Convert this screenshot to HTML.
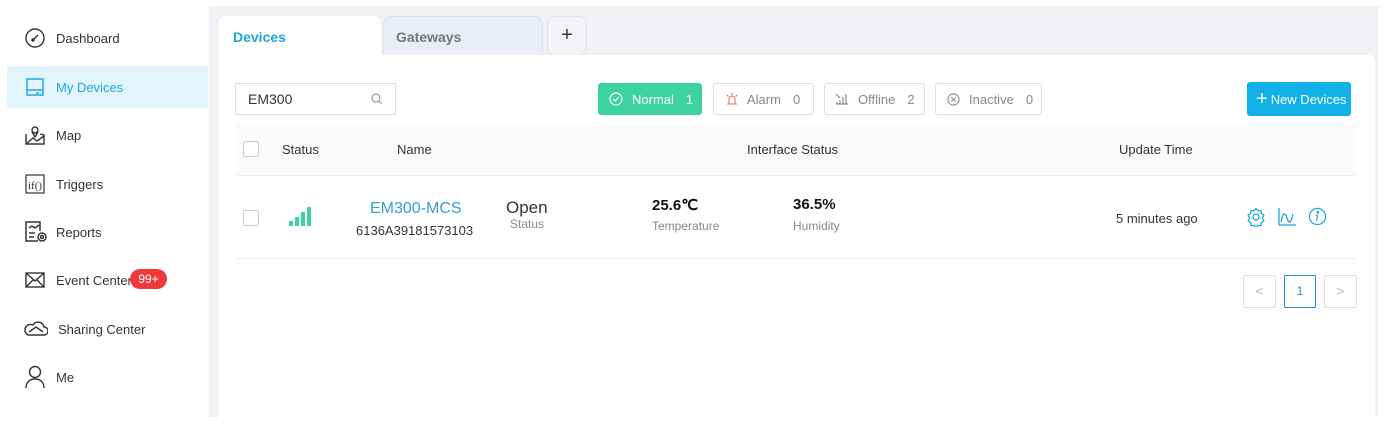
<!DOCTYPE html>
<html><head><style>
*{box-sizing:border-box;margin:0;padding:0}
body{width:1387px;height:431px;background:#fff;font-family:"Liberation Sans",sans-serif;position:relative;overflow:hidden;color:#333}
.abs{position:absolute}
.nav{position:absolute;left:0;width:208px;height:40px;display:flex;align-items:center;font-size:13px;color:#333}
.nav svg{position:absolute;left:24px}
.nav span{position:absolute;left:56px}
.btn{position:absolute;top:83px;height:32px;border:1px solid #ddd;border-radius:3px;font-size:13px;color:#888;display:flex;align-items:center}
.th{position:absolute;top:142px;font-size:13px;color:#333}
</style></head><body>
<!-- sidebar -->
<div class="nav" style="top:18px"><svg width="22" height="22" viewBox="0 0 22 22" fill="none" stroke="#333" stroke-width="1.4"><circle cx="11" cy="11" r="9"/><path d="M9 13l5-5"/><circle cx="9" cy="13" r="1" fill="#333"/></svg><span>Dashboard</span></div>
<div class="abs" style="left:7px;top:66px;width:201px;height:42px;background:#e3f5fc"></div>
<div class="nav" style="top:67px"><svg width="22" height="22" viewBox="0 0 22 22" fill="none" stroke="#1ea7e0" stroke-width="1.4"><path d="M3 3h16v16H3zM3 14h16M12 17h3"/></svg><span style="color:#1ea7e0">My Devices</span></div>
<div class="nav" style="top:115px"><svg width="22" height="22" viewBox="0 0 22 22" fill="none" stroke="#333" stroke-width="1.4"><path d="M2 10v10h18v-9l-4-1M2 20l7-6 4 3 7-5"/><circle cx="11" cy="6" r="3"/><path d="M8 8l3 5 3-5"/></svg><span>Map</span></div>
<div class="nav" style="top:164px"><svg width="22" height="22" viewBox="0 0 22 22" fill="none" stroke="#333" stroke-width="1.2"><rect x="2" y="2" width="18" height="18"/><text x="4" y="16" font-size="11" fill="#333" stroke="none" font-family="Liberation Serif">if()</text></svg><span>Triggers</span></div>
<div class="nav" style="top:212px"><svg width="24" height="24" viewBox="0 0 24 24" fill="none" stroke="#333" stroke-width="1.5"><path d="M14 21H2V2h14v9M5 8l3-2 3 2 4-3M5 13h6M5 17h5"/><circle cx="18" cy="17" r="4"/><circle cx="18" cy="17" r="1.5"/></svg><span>Reports</span></div>
<div class="nav" style="top:260px"><svg width="22" height="22" viewBox="0 0 22 22" fill="none" stroke="#333" stroke-width="1.4"><rect x="2" y="4" width="18" height="14"/><path d="M2 4l9 8 9-8M2 18l7-7M20 18l-7-7"/></svg><span>Event Center</span></div>
<div class="abs" style="left:130px;top:269px;width:37px;height:20px;border-radius:10px;background:#ee3a3a;color:#fff;font-size:12px;text-align:center;line-height:20px">99+</div>
<div class="nav" style="top:309px"><svg width="24" height="22" viewBox="0 0 24 22" fill="none" stroke="#333" stroke-width="1.4"><path d="M4 17h16a4 4 0 0 0 0-8 6 6 0 0 0-11-2 5 5 0 0 0-5 10z"/><path d="M5 14l7-5 7 5"/></svg><span style="left:58px">Sharing Center</span></div>
<div class="nav" style="top:357px"><svg width="22" height="24" viewBox="0 0 22 24" fill="none" stroke="#333" stroke-width="1.4"><circle cx="11" cy="7" r="5.5"/><path d="M2 23c0-6 4-9 9-9s9 3 9 9"/></svg><span>Me</span></div>
<!-- main gray -->
<div class="abs" style="left:209px;top:6px;width:1169px;height:411px;background:#eff1f4"></div>
<div class="abs" style="left:219px;top:16px;width:162px;height:42px;background:#fff;border-radius:8px 8px 0 0"></div>
<div class="abs" style="left:233px;top:29px;font-size:14px;font-weight:bold;color:#1ea7d6">Devices</div>
<div class="abs" style="left:383px;top:16px;width:160px;height:40px;background:#ebedf4;border:1px solid #dde0ea;border-bottom:none;border-radius:8px 8px 0 0"></div>
<div class="abs" style="left:396px;top:29px;font-size:14px;font-weight:bold;color:#777">Gateways</div>
<div class="abs" style="left:547px;top:16px;width:40px;height:40px;background:#f2f3f7;border:1px solid #dde0ea;border-radius:8px;text-align:center;line-height:36px;font-size:20px;color:#333">+</div>
<div class="abs" style="left:219px;top:55px;width:1156px;height:362px;background:#fff;border-radius:6px 6px 0 0"></div>
<!-- search -->
<div class="abs" style="left:235px;top:83px;width:161px;height:32px;border:1px solid #ddd;font-size:14px;padding:7px 12px;color:#333">EM300</div>
<svg class="abs" style="left:371px;top:93px" width="12" height="12" viewBox="0 0 12 12" fill="none" stroke="#999" stroke-width="1.2"><circle cx="5" cy="5" r="4"/><path d="M8 8l3 3"/></svg>
<!-- filters -->
<div class="btn" style="left:598px;width:104px;background:#3dd3a0;border-color:#3dd3a0;color:#fff"><svg style="margin-left:10px" width="14" height="14" viewBox="0 0 14 14" fill="none" stroke="#fff" stroke-width="1.2"><circle cx="7" cy="7" r="6"/><path d="M4 7l2 2 4-4"/></svg><span style="margin-left:9px">Normal</span><span style="margin-left:12px">1</span></div>
<div class="btn" style="left:713px;width:101px"><svg style="margin-left:11px" width="14" height="14" viewBox="0 0 14 14" fill="none" stroke="#f06a6a" stroke-width="1.1"><path d="M4 12V7a3 3 0 0 1 6 0v5M2 12h10M7 1v2M2 3l1.5 1.5M12 3l-1.5 1.5"/></svg><span style="margin-left:8px">Alarm</span><span style="margin-left:12px">0</span></div>
<div class="btn" style="left:824px;width:101px"><svg style="margin-left:10px" width="14" height="14" viewBox="0 0 14 14" fill="none" stroke="#777" stroke-width="1"><path d="M1 12h12M2 12v-2M5 12V8M8 12V5M11 12V2M1 2l4 4"/></svg><span style="margin-left:9px">Offline</span><span style="margin-left:12px">2</span></div>
<div class="btn" style="left:935px;width:107px"><svg style="margin-left:11px" width="13" height="13" viewBox="0 0 14 14" fill="none" stroke="#888" stroke-width="1.1"><circle cx="7" cy="7" r="6"/><path d="M4.5 4.5l5 5M9.5 4.5l-5 5"/></svg><span style="margin-left:9px">Inactive</span><span style="margin-left:12px">0</span></div>
<div class="abs" style="left:1247px;top:82px;width:104px;height:34px;background:#12b0e8;border-radius:3px;color:#fff;font-size:13px;display:flex;align-items:center"><span style="font-size:20px;margin-left:9px;margin-right:3px;font-weight:300">+</span>New Devices</div>
<!-- table header -->
<div class="abs" style="left:236px;top:124px;width:1120px;height:52px;background:#fafafa;border-bottom:1px solid #eee"></div>
<div class="abs" style="left:243px;top:141px;width:16px;height:16px;border:1px solid #ccc;border-radius:2px;background:#fff"></div>
<div class="th" style="left:282px">Status</div>
<div class="th" style="left:397px">Name</div>
<div class="th" style="left:747px">Interface Status</div>
<div class="th" style="left:1119px">Update Time</div>
<!-- row -->
<div class="abs" style="left:243px;top:210px;width:16px;height:16px;border:1px solid #ccc;border-radius:2px"></div>
<svg class="abs" style="left:289px;top:207px" width="24" height="20" viewBox="0 0 24 20" fill="#3dd3a0"><rect x="0" y="14" width="4" height="5"/><rect x="6" y="10" width="4" height="9"/><rect x="12" y="5" width="4" height="14"/><rect x="18" y="0" width="4" height="19"/></svg>
<div class="abs" style="left:370px;top:200px;font-size:16px;color:#3a9ecf">EM300-MCS</div>
<div class="abs" style="left:356px;top:223px;font-size:13px;color:#333">6136A39181573103</div>
<div class="abs" style="left:506px;top:198px;font-size:17px;color:#333">Open</div>
<div class="abs" style="left:510px;top:217px;font-size:12px;color:#888">Status</div>
<div class="abs" style="left:652px;top:196px;font-size:15px;font-weight:bold;color:#111">25.6℃</div>
<div class="abs" style="left:652px;top:219px;font-size:12px;color:#888">Temperature</div>
<div class="abs" style="left:793px;top:196px;font-size:15px;font-weight:bold;color:#111">36.5%</div>
<div class="abs" style="left:793px;top:219px;font-size:12px;color:#888">Humidity</div>
<div class="abs" style="left:1116px;top:211px;font-size:13px;color:#333">5 minutes ago</div>
<svg class="abs" style="left:1246px;top:207px" width="20" height="20" viewBox="0 0 20 20" fill="none" stroke="#1ea7d6" stroke-width="1.3"><path d="M10 1.5l2 2.2 3-.3.4 3 2.4 1.8-1.4 2.8 1.4 2.8-2.4 1.8-.4 3-3-.3-2 2.2-2-2.2-3 .3-.4-3-2.4-1.8 1.4-2.8L2.2 8.2l2.4-1.8.4-3 3 .3z"/><circle cx="10" cy="10" r="3"/></svg>
<svg class="abs" style="left:1277px;top:207px" width="20" height="20" viewBox="0 0 20 20" fill="none" stroke="#1ea7d6" stroke-width="1.3"><path d="M2 1v17h17M4 15c2-10 4-10 6-4s4 6 6-4"/></svg>
<svg class="abs" style="left:1308px;top:207px" width="19" height="19" viewBox="0 0 20 20" fill="none" stroke="#1ea7d6" stroke-width="1.3"><circle cx="10" cy="10" r="8.5"/><path d="M10 8.5l-1 6M8 8.5h2"/><circle cx="10.5" cy="5.7" r=".8" fill="#1ea7d6"/></svg>
<div class="abs" style="left:236px;top:258px;width:1120px;height:1px;background:#eee"></div>
<!-- pagination -->
<div class="abs" style="left:1243px;top:275px;width:33px;height:33px;border:1px solid #ddd;border-radius:2px;color:#bbb;text-align:center;line-height:31px;font-size:14px">&lt;</div>
<div class="abs" style="left:1284px;top:275px;width:32px;height:33px;border:1px solid #1e90c8;border-radius:2px;color:#1e90c8;text-align:center;line-height:31px;font-size:12px">1</div>
<div class="abs" style="left:1324px;top:275px;width:33px;height:33px;border:1px solid #ddd;border-radius:2px;color:#bbb;text-align:center;line-height:31px;font-size:14px">&gt;</div>
</body></html>
